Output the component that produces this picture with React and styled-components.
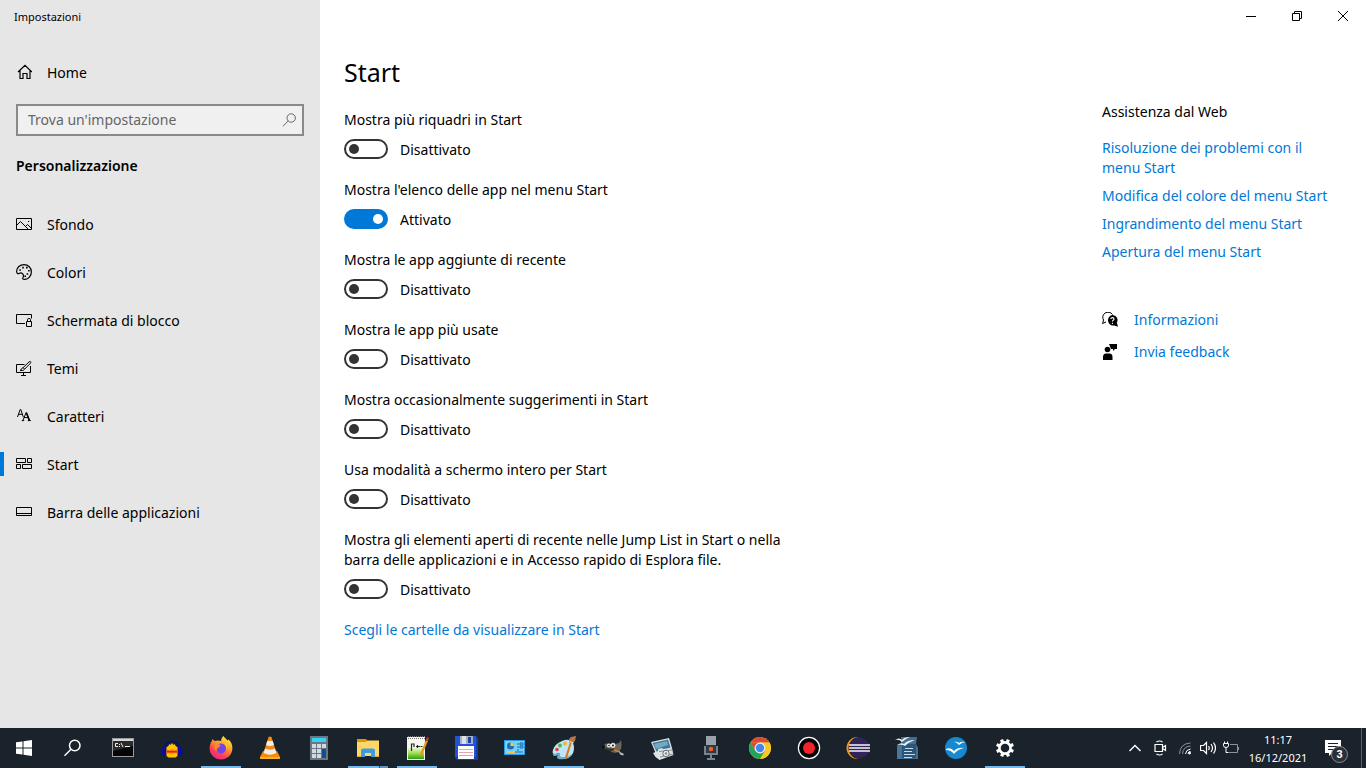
import { useState } from "react";
import styled, { createGlobalStyle } from "styled-components";

const GlobalStyle = createGlobalStyle`
    * {
        box-sizing: border-box;
    }
    body {
        margin: 0;
        background: #fff;
        color: #000;
        font-family: "Noto Sans", "Open Sans", sans-serif;
        font-size: 14px;
        line-height: 20px;
    }
`;

const Desktop = styled.div`
    display: flex;
    flex-direction: column;
    min-height: 100vh;
`;

const Window = styled.div`
    flex: 1;
    display: flex;
`;

/* sidebar */

const Sidebar = styled.aside`
    width: 320px;
    flex-shrink: 0;
    background: #e6e6e6;
`;

const WindowTitle = styled.div`
    height: 32px;
    padding: 2px 0 0 14px;
    font-size: 11px;
    line-height: 30px;
`;

const SideLink = styled.a`
    display: flex;
    align-items: center;
    gap: 15px;
    height: 48px;
    padding: 0 12px;
    border-left: 4px solid transparent;
    color: #000;
    text-decoration: none;
    &:hover {
        background: #dadada;
    }
`;

const HomeLink = styled(SideLink)`
    height: 40px;
    margin: 20px 0 12px;
`;

const Marker = styled.span`
    width: 4px;
    height: 24px;
    margin: 0 12px 0 -16px;
    background: ${(props) => (props.$active ? "#0078d7" : "transparent")};
`;

const IconSlot = styled.span`
    display: flex;
    align-items: center;
`;

const RowText = styled.span`
    padding-top: 2px;
`;

const SearchBox = styled.label`
    display: flex;
    align-items: center;
    height: 32px;
    margin: 0 16px;
    padding: 0 5px 0 10px;
    border: 2px solid #8a8a8a;
    background: #f0f0f0;
`;

const SearchInput = styled.input`
    flex: 1;
    min-width: 0;
    padding: 0;
    border: none;
    outline: none;
    background: transparent;
    font: inherit;
    &::placeholder {
        color: #666;
    }
`;

const SectionTitle = styled.h2`
    margin: 20px 16px 24px;
    font-size: 14px;
    font-weight: 600;
    line-height: 20px;
`;

/* content */

const Content = styled.div`
    flex: 1;
    min-width: 0;
`;

const TitleBar = styled.div`
    display: flex;
    justify-content: flex-end;
    height: 32px;
`;

const WindowButton = styled.button`
    display: flex;
    align-items: center;
    justify-content: center;
    width: 46px;
    padding: 0;
    border: none;
    background: transparent;
    &:hover {
        background: #e6e6e6;
    }
`;

const Columns = styled.div`
    display: flex;
    justify-content: space-between;
    gap: 24px;
    padding: 22px 24px 0;
`;

const Main = styled.main`
    max-width: 460px;
`;

const PageTitle = styled.h1`
    margin: 0 0 20px;
    font-size: 25px;
    font-weight: 400;
    line-height: 36px;
`;

const Setting = styled.div`
    margin-bottom: 20px;
`;

const SettingLabel = styled.label`
    display: block;
    margin-bottom: 8px;
`;

const SwitchRow = styled.div`
    display: flex;
    align-items: center;
    gap: 12px;
    height: 22px;
`;

const Switch = styled.input`
    appearance: none;
    display: flex;
    align-items: center;
    justify-content: flex-start;
    width: 44px;
    height: 20px;
    margin: 0;
    padding: 0 3px;
    border: 2px solid #333;
    border-radius: 10px;
    background: #fff;
    &::before {
        content: "";
        width: 10px;
        height: 10px;
        border-radius: 50%;
        background: #333;
    }
    &:checked {
        justify-content: flex-end;
        border-color: #0078d7;
        background: #0078d7;
    }
    &:checked::before {
        background: #fff;
    }
`;

const Link = styled.a`
    color: #0078d7;
    text-decoration: none;
    &:hover {
        color: #666;
    }
`;

const Help = styled.aside`
    width: 240px;
    flex-shrink: 0;
    padding-top: 48px;
`;

const HelpTitle = styled.h2`
    margin: 0 0 16px;
    font-size: 14px;
    font-weight: 400;
    line-height: 20px;
`;

const HelpList = styled.div`
    display: flex;
    flex-direction: column;
    gap: 8px;
    margin-bottom: 48px;
`;

const HelpAction = styled.div`
    display: flex;
    align-items: center;
    gap: 16px;
    margin-bottom: 12px;
`;

/* taskbar */

const Taskbar = styled.footer`
    display: flex;
    height: 40px;
    background: #1a222b;
    color: #fff;
`;

const TaskButton = styled.button`
    display: flex;
    align-items: center;
    justify-content: center;
    width: ${(props) => props.$width || 49}px;
    padding: 0;
    border: none;
    background: transparent;
    &:hover {
        background: #2d353e;
    }
`;

const Apps = styled.div`
    display: flex;
    margin-left: 2px;
`;

const AppButton = styled(TaskButton)`
    flex-direction: column;
    justify-content: flex-end;
    gap: 6px;
`;

const Running = styled.span`
    width: 40px;
    height: 2px;
    background: ${(props) => (props.$state === "many"
        ? "linear-gradient(90deg, #76b9ed 31px, #34506a 31px, #34506a 32px, #5f93bd 32px)"
        : props.$state === "one" ? "#76b9ed" : "transparent")};
`;

const Tray = styled.div`
    display: flex;
    margin-left: auto;
`;

const Clock = styled.button`
    width: 68px;
    padding: 1px 0 0;
    border: none;
    background: transparent;
    color: #fff;
    font-family: inherit;
    font-size: 11px;
    line-height: 18px;
    text-align: center;
`;

const Notifications = styled(TaskButton)`
    position: relative;
    padding-right: 7px;
`;

const Badge = styled.span`
    position: absolute;
    left: 19px;
    top: 18px;
    width: 17px;
    height: 17px;
    border: 1px solid #8a8f94;
    border-radius: 50%;
    background: #2a3036;
    color: #fff;
    font-size: 11px;
    font-weight: 600;
    line-height: 15px;
`;

const ShowDesktop = styled.button`
    width: 5px;
    padding: 0;
    border: none;
    border-left: 1px solid #596068;
    background: transparent;
`;

const Line = ({ size = 16, width = 1, color = "#000", children }) => (
    <svg width={size} height={size} viewBox={`0 0 ${size} ${size}`} fill="none" stroke={color} strokeWidth={width} aria-hidden="true">
        {children}
    </svg>
);

const Art = ({ children }) => (
    <svg width="24" height="24" viewBox="0 0 24 24" aria-hidden="true">
        {children}
    </svg>
);

const HomeIcon = () => (
    <Line width={1.2}>
        <path d="M1.5 8 8.5 1.3 15.5 8M3.5 6.5v8h3v-5h4v5h3v-8" transform="translate(.5 0)" />
    </Line>
);

const SearchIcon = ({ size = 16, color = "#666", width = 1 }) => (
    <svg width={size} height={size} viewBox="0 0 16 16" fill="none" stroke={color} strokeWidth={width} aria-hidden="true">
        <circle cx="10.2" cy="6" r="4.2" />
        <path d="M7.2 9 2 14.2" />
    </svg>
);

const sideItems = [
    {
        name: "Sfondo",
        icon: (
            <Line>
                <path d="M.5 2.5h15v11H.5zM.5 9.5l4-4 8 8M9.5 10.5l2-2 4 4" />
                <path d="M12 5.5h1.2" />
            </Line>
        ),
    },
    {
        name: "Colori",
        icon: (
            <Line width={1.2}>
                <path d="M8 .6c4.2 0 7.400 3.200 7.400 7.200 0 4.300-3 7.600-6.500 7.600-2.200 0-2.700-.8-1.800-2.200.9-1.500.2-2.600-.6-3.500-1-1.100-2-1.100-3-.4C1.900 10.400.6 9.200.6 7.300.6 3.500 4 .6 8 .6z" />
                <path d="M3.300 6h1.600M6.200 3.600h1.600M10 3.600h1.600M12.100 6.800h1.600M10.600 10h1.600M8.400 12.300H10" strokeWidth="1.600" />
            </Line>
        ),
    },
    {
        name: "Schermata di blocco",
        icon: (
            <Line>
                <path d="M9 11.5H.5v-9h15v4M10.5 9.5h5v5h-5zM11.500 9.500v-2q0-1 1.500-1t1.500 1v2" />
            </Line>
        ),
    },
    {
        name: "Temi",
        icon: (
            <Line>
                <path d="M8.5 4.5h-8v8h14V6M5 15.5h5M7.5 12.5v3M4 10.5c1.600 0 1.300-2.800 3-2.800 1.600 0 2 2.800-.4 2.800zM7.200 7.500l6-5.700q1.200-.8 1.500 0t-.3 1.500L8.800 9" />
            </Line>
        ),
    },
    {
        name: "Caratteri",
        icon: (
            <Line>
                <path d="M1.5 9 4.2 1.5h.6L7.3 9M2.500 6.300h4" />
                <path d="M6.800 12.500 10.200 4.500l3.400 8M8 9.600h4.200M5.800 12.600h2.400M11.800 12.600h3" />
                <path d="M10.400 4.700l3 7.800" strokeWidth="1.600" />
            </Line>
        ),
    },
    {
        name: "Start",
        active: true,
        icon: (
            <Line>
                <path d="M.5 2.500h9v4h-9zM11.500 2.500h4v4h-4zM.5 8.500h4v4h-4zM6.500 8.500h9v4h-9z" />
            </Line>
        ),
    },
    {
        name: "Barra delle applicazioni",
        icon: (
            <Line>
                <path d="M.5 3.500h15v8H.5zM.5 9.500h15" />
            </Line>
        ),
    },
];

const settings = [
    { id: "tiles", label: "Mostra più riquadri in Start", on: false },
    { id: "applist", label: "Mostra l'elenco delle app nel menu Start", on: true },
    { id: "recent", label: "Mostra le app aggiunte di recente", on: false },
    { id: "used", label: "Mostra le app più usate", on: false },
    { id: "tips", label: "Mostra occasionalmente suggerimenti in Start", on: false },
    { id: "full", label: "Usa modalità a schermo intero per Start", on: false },
    {
        id: "jump",
        label: "Mostra gli elementi aperti di recente nelle Jump List in Start o nella barra delle applicazioni e in Accesso rapido di Esplora file.",
        on: false,
    },
];

const helpLinks = [
    "Risoluzione dei problemi con il menu Start",
    "Modifica del colore del menu Start",
    "Ingrandimento del menu Start",
    "Apertura del menu Start",
];

const apps = [
    {
        name: "Prompt dei comandi",
        icon: (
            <Art>
                <path d="M1 2h22v19H1z" fill="#9a9d9f" />
                <path d="M2 3h20v2H2z" fill="#d4d6d7" />
                <path d="M2 5h20v15H2z" fill="#050505" />
                <path d="M2 5h20v5L2 15z" fill="#2b2b2b" />
                <path d="M7 7.500H4.500v3H7M8.500 8v1M8.500 10v1M10 7l2 4M14 10.500h5" stroke="#eee" fill="none" />
            </Art>
        ),
    },
    {
        name: "Audacity",
        icon: (
            <Art>
                <path d="M4.500 13C4.500 2.500 19.500 2.500 19.500 13" fill="none" stroke="#0b0b8a" strokeWidth="1.500" />
                <ellipse cx="4" cy="15.500" rx="2.600" ry="4.800" fill="#0c0c9e" />
                <ellipse cx="20" cy="15.500" rx="2.600" ry="4.800" fill="#0c0c9e" />
                <path d="M6.500 11l1.500-.5L9.500 8l1 1 1.500-2 1.500 2 1-1 1.500 2.500 1.500.5V20l-2 1.500h-7L6.500 20z" fill="#ffc400" />
                <path d="M6.500 14.500l1.500-1 1.500 1 1.500-1.500 1 1 1-1 1.500 1.500 1.500-1 1.500 1v2l-1.500 1-1.500-1-1.500 1.500-1.500-1-1.500 1-1.500-1.500-1.500 1-1-1z" fill="#ff7a10" />
                <path d="M6.500 15.700h11" stroke="#e8200c" strokeWidth="1.600" />
            </Art>
        ),
    },
    {
        name: "Firefox",
        state: "one",
        icon: (
            <Art>
                <defs>
                    <linearGradient id="fox" x1=".8" y1="0" x2=".2" y2="1">
                        <stop offset="0" stopColor="#fff13d" />
                        <stop offset=".4" stopColor="#ff9a2a" />
                        <stop offset=".7" stopColor="#ff4156" />
                        <stop offset="1" stopColor="#e0248c" />
                    </linearGradient>
                </defs>
                <path d="M14.500 0c1 2 2.700 2.800 4 4.500l1-1c2.600 2 3.900 5 3.900 8.500C23.400 18.500 18.500 23.500 12 23.500S.6 18.500.6 12.500c0-3 .9-5.500 2.200-7.500L3.500 3l2 2 3-.5L12 5c.2-2 1-3.700 2.500-5z" fill="url(#fox)" />
                <circle cx="12" cy="12.500" r="5" fill="#7543e3" />
                <path d="M6 8.500c2-1 3 .3 5.800.4-.2 1.600-2 1.400-2.300 3.100-2 0-2.500 2-1 3.500-3-1-4-4-2.500-7z" fill="#ff8a22" />
                <path d="M13 6.500c4 .5 5 4 4 7 2-2 2-5.500-.5-7.500z" fill="#ffc130" />
            </Art>
        ),
    },
    {
        name: "VLC",
        icon: (
            <Art>
                <path d="M5 15h14l3 6q.5 2-1.500 2h-17q-2 0-1.500-2z" fill="#f58a0b" />
                <path d="M2 21h20v1q0 1-1 1H3q-1 0-1-1z" fill="#ffae2a" />
                <path d="M10.500 1q1.500-1 3 0L18.500 17q-6.500 4-13 0z" fill="#f28a1a" />
                <path d="M9.300 5h5.400l1.300 4q-4 2-8 0zM7 12.500q5 2.500 10 0l1.300 4.500q-6.300 3.500-12.600 0z" fill="#eee" />
            </Art>
        ),
    },
    {
        name: "Calcolatrice",
        icon: (
            <Art>
                <path d="M3 0h18v24H3z" fill="#6b7883" />
                <path d="M5 2h14v4H5z" fill="#32d3f5" />
                <path d="M5 8h4v4H5zM10 8h4v4h-4zM15 8h4v4h-4zM5 13h4v4H5zM10 13h4v4h-4zM5 18h4v4H5zM10 18h4v4h-4z" fill="#d3d9de" />
                <path d="M15 13h4v9h-4z" fill="#134f8c" />
            </Art>
        ),
    },
    {
        name: "Esplora file",
        state: "many",
        icon: (
            <Art>
                <path d="M1 3h9l1.500 2H23v15H1z" fill="#e0960c" />
                <path d="M1 6h9l1-1.500h12V20H1z" fill="#ffd766" />
                <path d="M5 21v-7.500l2-1h10l2 1V21h-4v-4H9v4z" fill="#3d9be0" />
                <path d="M1 20h4v1H1zM19 20h4v1h-4z" fill="#e0aa2c" />
            </Art>
        ),
    },
    {
        name: "Notepad++",
        state: "one",
        icon: (
            <Art>
                <defs>
                    <linearGradient id="page" x1="0" y1="0" x2="0" y2="1">
                        <stop offset=".4" stopColor="#f6f8f0" />
                        <stop offset=".7" stopColor="#a5df55" />
                        <stop offset="1" stopColor="#2fa011" />
                    </linearGradient>
                </defs>
                <path d="M2 1h18v23H2z" fill="#f4f4f0" />
                <path d="M3 3h16v20H3z" fill="url(#page)" />
                <path d="M3 .5h17M3 2.500h17" stroke="#777" strokeDasharray="1 1" />
                <path d="M6.500 15V8h2.500v3M11 10.500h4M12.500 9v3M15.500 10.500h2" stroke="#252b28" strokeWidth="1.200" fill="none" />
                <path d="M15 18 21 4l2 1-6 14-2.500 1.500z" fill="#e69b18" />
                <path d="M20.700 4.600 22 .9l2 1-1.300 3.400z" fill="#b84337" />
            </Art>
        ),
    },
    {
        name: "Salva",
        icon: (
            <Art>
                <path d="M1 0h21l2 2v22H3l-2-2z" fill="#183caf" />
                <path d="M1 0h21v21H1z" fill="#2452d6" />
                <path d="M6 0h13v8H6z" fill="#a8b1bf" />
                <path d="M8 0h4v8H8z" fill="#dce1e8" />
                <path d="M14 1h3v6h-3z" fill="#1740a8" />
                <path d="M4 10h16v13H4z" fill="#fff" />
                <path d="M5 13.500h14M5 16.500h14M5 19.500h14" stroke="#eba1a5" />
            </Art>
        ),
    },
    {
        name: "Pannello di controllo",
        icon: (
            <Art>
                <path d="M1 4h21v15H1z" fill="#299ae1" />
                <path d="M2 5h19v13H2z" fill="#75d1fb" />
                <circle cx="7.500" cy="10" r="3.500" fill="#1670ba" />
                <path d="M7.500 10V6.500A3.500 3.500 0 0 1 11 10z" fill="#ffc739" />
                <path d="M14 8h2M14 11h2M14 14h2M17 7h3v2h-3zM17 10h3v2h-3z" stroke="#176baa" fill="none" />
                <path d="M4 16h8" stroke="#f5c14d" strokeWidth="2" />
                <path d="M12 16h8" stroke="#176baa" />
            </Art>
        ),
    },
    {
        name: "Paint",
        state: "one",
        icon: (
            <Art>
                <path d="M10 5c7-3 12 0 12 7 0 8-6 11-11 11-5 0-6-2-4-4 1-2-1-2-3-1-3 1-4-1-3-4 1-4 4-7 9-9z" fill="#bfe4f4" />
                <path d="M1 17c-1 3 2 4 5 2-3 4 2 5 6 4 6-1 9-5 10-8-2 4-6 6-12 6-4 0 0-4-3-4-2 0-4 2-6 0z" fill="#6facca" />
                <circle cx="5" cy="13.500" r="1.800" fill="#e93c3b" />
                <circle cx="8" cy="9.500" r="1.900" fill="#49b64b" />
                <circle cx="13" cy="7.500" r="2" fill="#f0b72f" />
                <path d="M18 6h2l-5 16q-1.500 2.500-2-.5z" fill="#d87a1d" />
                <path d="M17.500 7 17 3l2-2 5-1-1 5-2 2z" fill="#b87846" />
                <path d="M17.500 5.500l4 1.500" stroke="#e7d7b8" strokeWidth="1.200" />
            </Art>
        ),
    },
    {
        name: "GIMP",
        icon: (
            <Art>
                <path d="M4 8c3-1 4 0 6 0l2-2c1 2 3 2 6 1l2-3c1 5 1 10-3 12-4 2-7 0-9-2l-6-2z" fill="#6c6559" />
                <path d="M3 11c4 2 8 1 11 2-1 2-5 3-8 1z" fill="#35312d" />
                <circle cx="2.500" cy="11" r="1.700" fill="#111" />
                <circle cx="8" cy="9.500" r="2" fill="#eee" />
                <circle cx="12" cy="9.500" r="2.400" fill="#eee" />
                <circle cx="8" cy="9.500" r=".8" fill="#111" />
                <circle cx="12" cy="9.500" r="1" fill="#111" />
                <path d="M13 14l6 2" stroke="#cf872e" strokeWidth="1.600" />
                <path d="M18 15.500l5 2.500-1 1.500-3-1z" fill="#b8bdc4" />
            </Art>
        ),
    },
    {
        name: "Immagini",
        icon: (
            <Art>
                <path d="M1 6 19 2l3 10-16 6z" fill="#d3e3ea" />
                <path d="M2.500 7 18 3.500l2.500 8L7 16.500z" fill="#437793" />
                <path d="M4 8l13-3 1 4-12 4z" fill="#72a9c4" />
                <path d="M3 17l5-2v-2l4-1 1 1 9-1 1.500 7-14 5-4-3z" fill="#dfe2e3" />
                <path d="M9 15.500l13-1.500M10 21l13-3" stroke="#888f92" />
                <circle cx="16" cy="17.500" r="3.200" fill="#eee" stroke="#656e72" />
                <circle cx="16" cy="17.500" r="1.200" fill="#7d868b" />
            </Art>
        ),
    },
    {
        name: "Registratore",
        icon: (
            <Art>
                <path d="M6 18V10M18 18V10M5 18h14M12 18v5M8 23h8" stroke="#77838d" strokeWidth="2" fill="none" />
                <path d="M7 0h10v16H7z" fill="#98a2aa" />
                <path d="M7 9h10v8H7z" fill="#303a43" />
                <circle cx="12" cy="13" r="2.300" fill="#ff5a1f" />
            </Art>
        ),
    },
    {
        name: "Chrome",
        icon: (
            <Art>
                <circle cx="12" cy="12" r="11" fill="#f6c927" />
                <path d="M2.500 6.500A11 11 0 0 1 21.500 6.500H12z" fill="#dc493b" />
                <path d="M2.500 6.500 7.300 14.700 12 12l9.500-5.500z" fill="#dc493b" />
                <path d="M12 6.500h9.500A11 11 0 0 1 12 23l5-8.500z" fill="#f6c927" />
                <path d="M2.500 6.500A11 11 0 0 0 12 23l4.800-8.300L7.500 15z" fill="#24a45a" />
                <circle cx="12" cy="12" r="5.400" fill="#f1f1f1" />
                <circle cx="12" cy="12" r="4.200" fill="#4387ed" />
            </Art>
        ),
    },
    {
        name: "Registra schermo",
        icon: (
            <Art>
                <circle cx="12" cy="12" r="10.600" fill="#050505" stroke="#fff" strokeWidth="1.200" />
                <circle cx="12" cy="12" r="6" fill="#f3232b" />
            </Art>
        ),
    },
    {
        name: "Eclipse",
        icon: (
            <Art>
                <circle cx="11.500" cy="12" r="11" fill="#f7941e" />
                <circle cx="13.500" cy="12" r="11" fill="#1a222b" />
                <circle cx="13.500" cy="12" r="10.200" fill="#30255b" />
                <path d="M3 9h21M3 12h21M3 15h21" stroke="#f6f3fa" strokeWidth="1.500" />
            </Art>
        ),
    },
    {
        name: "OpenOffice Writer",
        icon: (
            <Art>
                <path d="M6 1h16l-1 7 2 4v11H2V9h4z" fill="#426f94" />
                <path d="M7 8h14v14H7z" fill="#2c5679" />
                <path d="M2 10h4v13H2z" fill="#4c7697" />
                <path d="M0 4q4-3 7 0 2-3 8-3-5 2-8 5-3-3-7-2zM2 9q4-3 7-1 3-4 11-4-6 2-10 6-3-2-8-1z" fill="#e9f0f3" />
                <path d="M10 12.500h8M9 15.500h8M9 18.500h11M9 21.500h8" stroke="#c9dae6" />
            </Art>
        ),
    },
    {
        name: "OpenOffice",
        icon: (
            <Art>
                <circle cx="12" cy="12" r="11" fill="#1689d0" />
                <path d="M10 6q3-1 5 1 2-2 7-1-4 0-7 3-2-3-5-3zM2 13q5-2 8 2 4-4 10-3-6 1-10 6-3-4-8-4z" fill="#fff" />
            </Art>
        ),
    },
    {
        name: "Impostazioni",
        state: "one",
        icon: (
            <Art>
                <circle cx="12" cy="12" r="5.600" fill="none" stroke="#fff" strokeWidth="2.600" />
                <g stroke="#fff" strokeWidth="3.200">
                    {[0, 45, 90, 135, 180, 225, 270, 315].map((a) => (
                        <path key={a} d="M12 3v3" transform={`rotate(${a + 22} 12 12)`} />
                    ))}
                </g>
            </Art>
        ),
    },
];

const SettingItem = ({ setting }) => {
    const [on, setOn] = useState(setting.on);
    return (
        <Setting>
            <SettingLabel htmlFor={setting.id}>{setting.label}</SettingLabel>
            <SwitchRow>
                <Switch type="checkbox" id={setting.id} checked={on} onChange={(e) => setOn(e.target.checked)} />
                <RowText>{on ? "Attivato" : "Disattivato"}</RowText>
            </SwitchRow>
        </Setting>
    );
};

const SettingsSidebar = () => (
    <Sidebar>
        <WindowTitle>Impostazioni</WindowTitle>
        <HomeLink href="#home">
            <IconSlot><HomeIcon /></IconSlot>
            <RowText>Home</RowText>
        </HomeLink>
        <SearchBox>
            <SearchInput type="text" placeholder="Trova un'impostazione" aria-label="Trova un'impostazione" />
            <SearchIcon />
        </SearchBox>
        <SectionTitle>Personalizzazione</SectionTitle>
        <nav>
            {sideItems.map((item) => (
                <SideLink href={`#${item.name}`} key={item.name}>
                    <IconSlot>
                        <Marker $active={item.active} />
                        {item.icon}
                    </IconSlot>
                    <RowText>{item.name}</RowText>
                </SideLink>
            ))}
        </nav>
    </Sidebar>
);

const HelpPanel = () => (
    <Help>
        <HelpTitle>Assistenza dal Web</HelpTitle>
        <HelpList>
            {helpLinks.map((text) => (
                <Link href="#help" key={text}>{text}</Link>
            ))}
        </HelpList>
        <HelpAction>
            <svg width="16" height="16" viewBox="0 0 16 16" aria-hidden="true">
                <path d="M10.500 2.500A5.300 5 0 1 0 1.600 8L.5 11.500 4 10" fill="none" stroke="#000" />
                <path d="M10.300 3a5.200 5.200 0 0 1 4.600 7.700l1.100 4-3.600-1.200A5.300 5.300 0 1 1 10.300 3z" fill="#000" />
                <path d="M8.800 7q.2-1.400 1.700-1.400T12 7q0 .8-.8 1.300t-.8 1.200M10.400 10.700v1.200" fill="none" stroke="#fff" strokeWidth="1.100" />
            </svg>
            <Link href="#info">Informazioni</Link>
        </HelpAction>
        <HelpAction>
            <svg width="16" height="16" viewBox="0 0 16 16" aria-hidden="true">
                <path d="M7 0h8v5h-2l-2 2V5H9z" />
                <circle cx="5.500" cy="5.500" r="2.800" />
                <path d="M1 16v-3q0-3.500 3-3.500h3.500q3 0 3 3.500v3z" />
            </svg>
            <Link href="#feedback">Invia feedback</Link>
        </HelpAction>
    </Help>
);

const BottomBar = () => (
    <Taskbar>
        <TaskButton $width={48} aria-label="Start">
            <svg width="16" height="16" viewBox="0 0 16 16" fill="#fff" aria-hidden="true">
                <path d="M0 2.300 6.500 1.400v6.100H0zM7.500 1.200 16 0v7.500H7.500zM0 8.500h6.500v6.100L0 13.700zM7.500 8.500H16V16l-8.500-1.200z" />
            </svg>
        </TaskButton>
        <TaskButton $width={48} aria-label="Cerca">
            <SearchIcon size={20} color="#fff" width={1.2} />
        </TaskButton>
        <Apps>
            {apps.map((app) => (
                <AppButton key={app.name} aria-label={app.name}>
                    {app.icon}
                    <Running $state={app.state} />
                </AppButton>
            ))}
        </Apps>
        <Tray>
            <TaskButton $width={24} aria-label="Mostra icone nascoste">
                <Line width={1.4} color="#fff"><path d="M2.500 11 8 5.500l5.500 5.500" /></Line>
            </TaskButton>
            <TaskButton $width={25} aria-label="Riunione">
                <Line width={1.2} color="#fff">
                    <path d="M3 4.500h7.500v7H3zM10.500 7.500l3-2v5l-3-2M4.500 2q3-2 6 0M4.500 14q3 2 6 0" />
                </Line>
            </TaskButton>
            <TaskButton $width={25} aria-label="Rete">
                <Line color="#fff">
                    <g stroke="#8c9298">
                        <path d="M2.500 14Q3 3.500 13.500 3" />
                        <path d="M5.500 14Q6 6.500 13.500 6" />
                    </g>
                    <path d="M8.500 14q.5-4.500 5-5M11 13.500q.5-2 2.500-2" />
                    <circle cx="12.500" cy="13" r="1" fill="#fff" />
                </Line>
            </TaskButton>
            <TaskButton $width={21} aria-label="Volume">
                <Line width={1.2} color="#fff">
                    <path d="M.5 5.500h3l3-3v11l-3-3h-3zM8.500 6q1.500 2 0 4M11 4q3 4 0 8M13.500 2.500q4 5.500 0 11" />
                </Line>
            </TaskButton>
            <TaskButton $width={26} aria-label="Batteria">
                <Line color="#fff">
                    <path d="M1.500 1.500v2M4.500 1.500v2M.5 3.500h5v2q0 2-2.500 2t-2.500-2zM3 7.500v5h2" />
                    <path d="M7 4.500h7.500v8H5M15.500 7v3" stroke="#8c9298" />
                </Line>
            </TaskButton>
            <Clock>11:17<br />16/12/2021</Clock>
            <Notifications $width={49} aria-label="Notifiche">
                <svg width="16" height="16" viewBox="0 0 16 16" aria-hidden="true">
                    <path d="M0 0h16v13H7l-3 3v-3H0z" fill="#fff" />
                    <path d="M3 3.500h10M3 6.500h10M3 9.500h7" stroke="#1a222b" />
                </svg>
                <Badge>3</Badge>
            </Notifications>
            <ShowDesktop aria-label="Mostra desktop" />
        </Tray>
    </Taskbar>
);

const App = () => {
    return (
        <Desktop>
            <GlobalStyle />
            <Window>
                <SettingsSidebar />
                <Content>
                    <TitleBar>
                        <WindowButton aria-label="Riduci a icona">
                            <Line size={10}><path d="M0 5.500h10" /></Line>
                        </WindowButton>
                        <WindowButton aria-label="Ripristina">
                            <Line size={10}><path d="M.5 2.500h7v7h-7zM2.500 2.500v-2h7v7h-2" /></Line>
                        </WindowButton>
                        <WindowButton aria-label="Chiudi">
                            <Line size={10}><path d="M0 0l10 10M10 0 0 10" /></Line>
                        </WindowButton>
                    </TitleBar>
                    <Columns>
                        <Main>
                            <PageTitle>Start</PageTitle>
                            {settings.map((setting) => (
                                <SettingItem key={setting.id} setting={setting} />
                            ))}
                            <Link href="#folders">Scegli le cartelle da visualizzare in Start</Link>
                        </Main>
                        <HelpPanel />
                    </Columns>
                </Content>
            </Window>
            <BottomBar />
        </Desktop>
    );
};

export default App;
